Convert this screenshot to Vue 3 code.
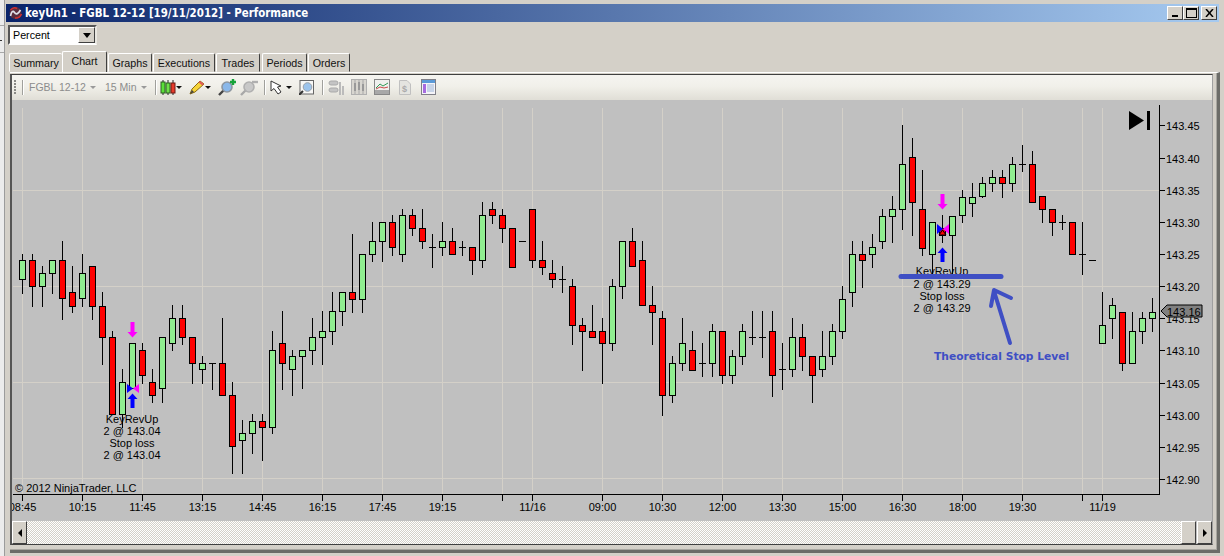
<script setup>
const raw = [
[254,260,279,293,'g'],[254,260,286,306,'r'],[266,273,286,306,'g'],[260,260,273,293,'g'],[241,260,298,319,'r'],[266,292,306,312,'r'],[254,273,298,306,'g'],[266,266,306,319,'r'],
[292,306,337,364,'r'],[331,337,414,414,'r'],[369,382,414,427,'g'],[343,343,388,388,'g'],[343,350,375,383,'r'],[369,382,395,402,'r'],[337,337,388,402,'g'],[305,318,343,350,'g'],
[305,318,337,344,'r'],[337,337,363,383,'r'],[356,363,369,383,'g'],[363,363,363,389,'d'],[318,363,395,395,'r'],[382,395,446,473,'r'],[420,433,440,473,'g'],[414,421,433,453,'g'],
[414,421,427,460,'r'],[331,350,427,433,'g'],[311,343,363,389,'r'],[350,356,369,395,'g'],[350,350,356,388,'g'],[318,337,350,364,'g'],[311,331,337,364,'g'],[292,311,331,344,'g'],
[292,292,311,325,'g'],[234,292,299,312,'r'],[254,254,299,312,'g'],[222,241,254,261,'g'],[222,222,241,261,'g'],[215,222,247,255,'r'],[209,215,254,261,'g'],[209,215,228,235,'r'],
[209,228,241,248,'r'],[234,247,247,267,'d'],[222,241,247,255,'g'],[228,241,254,254,'r'],[241,247,247,255,'d'],[247,247,260,274,'r'],[202,215,260,267,'g'],[202,209,215,223,'r'],
[209,215,228,242,'r'],[228,228,267,267,'r'],[241,241,241,241,'d'],[209,209,260,267,'r'],[241,260,267,274,'r'],[260,273,279,287,'r'],[266,279,279,292,'d'],[279,286,325,344,'r'],
[318,325,331,370,'r'],[305,331,337,337,'r'],[318,331,343,383,'r'],[279,286,343,350,'g'],[241,241,286,298,'g'],[228,241,266,266,'r'],[241,260,305,305,'r'],[286,305,312,344,'r'],
[311,318,395,415,'r'],[356,363,395,402,'g'],[318,343,363,370,'g'],[331,350,370,370,'r'],[343,363,363,376,'d'],[324,331,363,376,'g'],[331,331,375,383,'r'],[350,356,375,383,'g'],
[324,331,356,364,'g'],[311,337,337,344,'d'],[311,337,337,357,'d'],[311,331,375,396,'r'],[343,369,369,389,'d'],[318,337,369,376,'g'],[324,337,356,370,'r'],[356,356,375,402,'r'],
[331,356,369,376,'g'],[324,331,356,364,'g'],[286,299,331,338,'g'],[241,254,292,306,'g'],[241,254,260,287,'r'],[234,247,254,267,'g'],[209,216,241,248,'g'],[196,209,216,242,'g'],
[125,164,209,229,'g'],[138,157,202,235,'r'],[170,209,248,255,'r'],[222,222,254,273,'g'],[215,228,235,242,'r'],[216,216,235,275,'g'],[190,197,215,222,'g'],[183,197,203,216,'g'],
[177,183,196,197,'g'],[170,177,183,191,'g'],[170,177,183,197,'r'],[157,164,183,191,'g'],[145,164,164,171,'d'],[151,164,202,202,'r'],[196,196,209,222,'r'],[209,209,222,235,'r'],
[215,222,222,229,'d'],[222,222,254,254,'r'],[222,254,254,274,'d'],[260,260,260,260,'d'],[292,325,343,343,'g'],[298,305,318,338,'g'],[312,312,363,370,'r'],[312,331,363,363,'g'],
[312,318,331,343,'g'],[298,312,318,331,'g']
]
const candles = raw.map((c, i) => ({
  x: 22 + i * 10, wickTop: c[0], bodyTop: c[1], bodyBottom: c[2], wickBottom: c[3], kind: c[4]
}))
const vGrid = [22, 82, 142, 202, 262, 322, 382, 442, 502, 532, 602, 662, 722, 782, 842, 902, 962, 1022, 1082, 1102]
const hGrid = [190, 286, 382, 478]
const prices = [
  ['143.45', 125], ['143.40', 158], ['143.35', 190], ['143.30', 222], ['143.25', 254], ['143.20', 286],
  ['143.15', 318], ['143.10', 350], ['143.05', 383], ['143.00', 415], ['142.95', 447], ['142.90', 479]
]
const times = [
  ['08:45', 22], ['10:15', 82], ['11:45', 142], ['13:15', 202], ['14:45', 262], ['16:15', 322], ['17:45', 382],
  ['19:15', 442], ['', 502], ['11/16', 532], ['09:00', 602], ['10:30', 662], ['12:00', 722], ['13:30', 782],
  ['15:00', 842], ['16:30', 902], ['18:00', 962], ['19:30', 1022], ['', 1082], ['11/19', 1102]
]
const tabs = ['Summary', 'Chart', 'Graphs', 'Executions', 'Trades', 'Periods', 'Orders']
</script>

<template>
  <div class="screen">
    <aside class="behind"><i class="tick one"></i><i class="tick dark"></i><i class="tick two"></i></aside>
    <div class="window">
      <header class="title">
        <svg class="logo" width="15" height="14" viewBox="0 0 15 14">
          <circle cx="7.5" cy="7" r="6" fill="#5a2c3c" />
          <path d="M2.5 10 Q4 3 6.5 6.5 T12.5 4" fill="none" stroke="#e0e0e8" stroke-width="1.7" />
          <path d="M2.5 4 Q5.5 0.5 9 2.5" fill="none" stroke="#d03030" stroke-width="1.6" />
          <path d="M7 12 Q11.5 12.5 13.5 8" fill="none" stroke="#d03030" stroke-width="1.6" />
        </svg>
        <span class="title-text">keyUn1 - FGBL 12-12 [19/11/2012] - Performance</span>
        <div class="caption-buttons">
          <button class="cap"><i class="min"></i></button>
          <button class="cap"><i class="max"></i></button>
          <button class="cap gap"><svg width="9" height="8" viewBox="0 0 9 8"><path d="M1 0 L8 8 M8 0 L1 8" stroke="#000" stroke-width="1.5" /></svg></button>
        </div>
      </header>

      <div class="filters">
        <div class="combo">
          <span class="combo-value">Percent</span>
          <span class="combo-btn"><i class="down"></i></span>
        </div>
      </div>

      <nav class="tabs">
        <span v-for="t in tabs" :key="t" class="tab" :class="['tab-' + t.toLowerCase(), { active: t === 'Chart' }]">{{ t }}</span>
      </nav>

      <section class="panel">
        <div class="sunken">
          <div class="toolbar">
            <span class="grip"></span>
            <span class="sep first"></span>
            <span class="tool-label fgbl">FGBL 12-12</span><i class="caret grey c1"></i>
            <span class="tool-label mins">15 Min</span><i class="caret grey c2"></i>
            <span class="sep s2"></span>
            <svg class="ic i-candles" width="16" height="15" viewBox="0 0 16 15">
              <path d="M3 0v15M8 0v15M13 0v15" stroke="#222" />
              <rect x="1" y="2" width="4" height="11" fill="#5be03a" stroke="#2b5d20" />
              <rect x="6" y="3" width="4" height="10" fill="#6ee04a" stroke="#2b5d20" />
              <rect x="11" y="3" width="4" height="10" fill="#e83a2a" stroke="#6d1a14" />
            </svg>
            <i class="caret c3"></i>
            <svg class="ic i-pencil" width="16" height="15" viewBox="0 0 16 15">
              <path d="M1 14 L3 9 L11 1 L15 4 L6 12 Z" fill="#f6d43a" stroke="#8b6b10" />
              <path d="M11 1 L15 4 L13.5 5.5 L9.5 2.5 Z" fill="#e05a5a" />
              <path d="M1 14 L3 10 L5 12 Z" fill="#444" />
            </svg>
            <i class="caret c4"></i>
            <svg class="ic i-zin" width="18" height="17" viewBox="0 0 18 17">
              <path d="M1 16 L6 11" stroke="#444" stroke-width="2.4" />
              <circle cx="9" cy="8" r="5" fill="#8ab8ea" stroke="#8d96a0" stroke-width="1.6" />
              <path d="M12 3H18M15 0V6" stroke="#16a33a" stroke-width="2.4" />
            </svg>
            <svg class="ic i-zout" width="18" height="17" viewBox="0 0 18 17">
              <path d="M1 16 L6 11" stroke="#a8a8a8" stroke-width="2.4" />
              <circle cx="9" cy="8" r="5" fill="#c8c8c8" stroke="#b0b0b0" stroke-width="1.6" />
              <path d="M12 3H18" stroke="#b0b0b0" stroke-width="2.4" />
            </svg>
            <span class="sep s3"></span>
            <svg class="ic i-cursor" width="14" height="15" viewBox="0 0 14 15">
              <path d="M1 1 L1 11 L4 8.5 L8 14 L11 12 L7.5 7 L11 6 Z" fill="#fff" stroke="#333" />
            </svg>
            <i class="caret c5"></i>
            <svg class="ic i-find" width="15" height="15" viewBox="0 0 15 15">
              <rect x="1" y="0.5" width="13.5" height="13.5" fill="#f8f8f6" stroke="#666" />
              <circle cx="8.5" cy="7" r="4.3" fill="#9cc4ec" stroke="#98a0a8" />
              <path d="M0 15 L4 11" stroke="#333" stroke-width="2" />
            </svg>
            <span class="sep s4"></span>
            <svg class="ic i-a" width="17" height="15" viewBox="0 0 17 15">
              <path d="M11 2h2v13h-2zM14 6h2v9h-2z" fill="#bbb" />
              <rect x="1" y="1" width="9" height="4" rx="2" fill="#c4c4c4" stroke="#aaa" />
              <rect x="1" y="8" width="9" height="4" rx="2" fill="#c4c4c4" stroke="#aaa" />
            </svg>
            <svg class="ic i-b" width="16" height="16" viewBox="0 0 16 16">
              <rect x="0.5" y="0.5" width="15" height="15" fill="#d8d6d0" stroke="#b0b0b0" />
              <path d="M4 1v14M8 1v14M12 1v14" stroke="#a8a8a8" />
              <path d="M3 4h2v8H3zM7 3h2v8H7zM11 5h2v7h-2z" fill="#999" />
            </svg>
            <svg class="ic i-c" width="16" height="16" viewBox="0 0 16 16">
              <rect x="0.5" y="0.5" width="15" height="15" fill="#f0f0ee" stroke="#888" />
              <path d="M1 11 L15 11 L15 15 L1 15Z" fill="#a8a8a8" />
              <path d="M2 9 L6 5 L9 7 L14 4" fill="none" stroke="#2f9a55" />
              <path d="M2 10 L6 8 L10 9 L14 8" fill="none" stroke="#c84848" />
            </svg>
            <svg class="ic i-d" width="12" height="15" viewBox="0 0 12 15">
              <path d="M0.5 0.5H8L11.5 4V14.5H0.5Z" fill="#e4e4e0" stroke="#c0c0c0" />
              <text x="3" y="11.5" class="dollar">$</text>
            </svg>
            <svg class="ic i-e" width="15" height="16" viewBox="0 0 15 16">
              <rect x="0.5" y="0.5" width="14" height="15" fill="#f4f4f8" stroke="#808088" />
              <rect x="1" y="1" width="13" height="3" fill="#5b9ad8" />
              <rect x="2" y="5" width="3" height="9" fill="#a66be0" />
              <path d="M6 6h7M6 8h7M6 10h7M6 12h7" stroke="#9ab4d8" />
            </svg>
          </div>

          <svg class="chart" width="1200" height="421" viewBox="12 100 1200 421" shape-rendering="crispEdges">
            <rect v-for="x in vGrid" :key="'v' + x" :x="x" y="108" width="1" height="386" class="grid" />
            <rect v-for="y in hGrid" :key="'h' + y" x="13" :y="y" width="1146" height="1" class="grid" />

            <g v-for="c in candles" :key="c.x">
              <rect v-if="c.wickBottom > c.wickTop" :x="c.x" :y="c.wickTop" width="1" :height="c.wickBottom - c.wickTop + 1" />
              <rect v-if="c.kind === 'd'" :x="c.x - 3" :y="c.bodyTop" width="7" height="1" />
              <rect v-else :x="c.x - 2.5" :y="c.bodyTop + 0.5" width="6" :height="c.bodyBottom - c.bodyTop" :class="c.kind === 'g' ? 'up' : 'dn'" />
            </g>

            <rect x="1159" y="105" width="1" height="390" />
            <rect x="13" y="494" width="1147" height="1" />
            <rect v-for="p in prices" :key="'pt' + p[0]" x="1160" :y="p[1]" width="5" height="1" />
            <text v-for="p in prices" :key="p[0]" x="1166" :y="p[1] + 5" class="label">{{ p[0] }}</text>
            <rect v-for="t in times" :key="'tt' + t[1]" :x="t[1]" y="495" width="1" height="6" />
            <text v-for="t in times" :key="'tl' + t[1]" :x="t[1] + 0.5" y="511" class="label mid">{{ t[0] }}</text>

            <g shape-rendering="auto">
              <path d="M1129 111 L1144 120.5 L1129 130 Z" fill="#000" />
              <rect x="1147" y="111" width="3" height="19" fill="#000" />

              <path d="M130.5 322h4v10h3l-5 5.5-5-5.5h3z" class="pink" />
              <path d="M130.5 408h4v-9h3l-5-5.5-5 5.5h3z" class="blue" />
              <path d="M127 384l6 4.5-6 4.5z" fill="#0000ff" />
              <path d="M139 384l-6 4.5 6 4.5z" class="pink" />
              <path d="M940.5 194h4v10h3l-5 5.5-5-5.5h3z" class="pink" />
              <path d="M940.5 262h4v-9h3l-5-5.5-5 5.5h3z" class="blue" />
              <path d="M937 224l6 5-6 5z" fill="#0000ff" />
              <path d="M949 224l-6 5 6 5z" class="pink" />
              <path d="M939 235l3.5-5 3.5 5z" fill="#ff0000" stroke="#000" />

              <text x="132" y="423" class="label mid">KeyRevUp</text>
              <text x="132" y="435" class="label mid">2 @ 143.04</text>
              <text x="132" y="447" class="label mid">Stop loss</text>
              <text x="132" y="459" class="label mid">2 @ 143.04</text>
              <text x="942" y="275" class="label mid">KeyRevUp</text>
              <text x="942" y="288" class="label mid">2 @ 143.29</text>
              <text x="942" y="300" class="label mid">Stop loss</text>
              <text x="942" y="312" class="label mid">2 @ 143.29</text>
              <text x="15" y="492" class="label">© 2012 NinjaTrader, LLC</text>

              <path d="M1202 305 L1167 305 L1161 311 L1167 317 L1202 317 Z" fill="#808080" stroke="#000" />
              <text x="1167" y="316" class="label">143.16</text>

              <path d="M901 276.5 H1001" class="mark" stroke-width="5" />
              <path d="M1010 343 L994 291 M991 306 L994 290 L1011 298" class="mark" stroke-width="4" fill="none" />
              <text x="934" y="360" class="note">Theoretical Stop Level</text>
            </g>
          </svg>

          <div class="scrollbar">
            <button class="sb-btn"><i class="arrow left"></i></button>
            <span class="track"></span>
            <button class="sb-btn thumb"></button>
            <button class="sb-btn"><i class="arrow right"></i></button>
          </div>
        </div>
      </section>
    </div>
  </div>
</template>

<style scoped>
.screen { width: 1224px; height: 556px; display: flex; background: #d4d0c8; overflow: hidden; font-family: "Liberation Sans", Arial, sans-serif; }
.behind { width: 5px; background: #ececec; border-right: 1px solid #9c9c9c; position: relative; box-sizing: border-box; }
.tick { position: absolute; left: 0; width: 4px; background: #a8a8a8; height: 1px; }
.tick.one { top: 25px; }
.tick.two { top: 52px; }
.tick.dark { top: 40px; width: 2px; background: #333; }
.window { flex: 1; display: flex; flex-direction: column; padding-top: 4px; min-width: 0; border-top: 0; }
.title { height: 18px; flex: none; margin: 0 5px 0 1px; display: flex; align-items: center; background: linear-gradient(90deg, #0a246a 0%, #a6caf0 100%); color: #fff; }
.logo { margin: 0 2px 0 2px; flex: none; }
.title-text { font-family: "DejaVu Sans", sans-serif; font-weight: bold; font-size: 11.4px; font-stretch: condensed; white-space: nowrap; }
.caption-buttons { margin-left: auto; display: flex; margin-right: 2px; }
.cap { width: 16px; height: 14px; padding: 0; display: flex; align-items: center; justify-content: center; background: #d4d0c8; border: 1px solid; border-color: #fff #404040 #404040 #fff; position: relative; }
.cap.gap { margin-left: 2px; }
.min { display: block; width: 6px; height: 2px; background: #000; margin-top: 6px; }
.max { display: block; width: 9px; height: 7px; border: 1px solid #000; border-top-width: 2px; }
.filters { height: 29px; flex: none; padding: 3px 0 0 3px; box-sizing: border-box; }
.combo { width: 89px; height: 20px; box-sizing: border-box; display: flex; background: #fff; border: 2px solid; border-color: #555 #e8e6e0 #fff #555; }
.combo-value { flex: 1; font-size: 10.7px; line-height: 16px; padding-left: 3px; }
.combo-btn { width: 15px; background: #d4d0c8; border: 1px solid; border-color: #fff #404040 #404040 #fff; display: flex; align-items: center; justify-content: center; }
.down { width: 0; height: 0; border: 4px solid transparent; border-top: 5px solid #000; border-bottom: 0; }
.tabs { height: 21px; flex: none; display: flex; align-items: flex-end; padding-left: 4px; font-size: 10.7px; }
.tab { height: 19px; box-sizing: border-box; padding-top: 2px; margin-right: 1px; text-align: center; border: 1px solid; border-color: #fff #404040 transparent #fff; border-radius: 2px 2px 0 0; line-height: 15px; color: #111; }
.tab-summary { width: 53px; border-right: 0; margin-right: 0; }
.tab.active { width: 45px; height: 21px; border-bottom: 0; }
.tab-graphs { width: 44px; }
.tab-executions { width: 62px; }
.tab-trades { width: 44px; margin-right: 2px; }
.tab-periods { width: 45px; }
.tab-orders { width: 42px; }
.panel { flex: none; margin: 0 4px 0 5px; height: 481px; box-sizing: border-box; padding: 1px 3px 4px 0; border-top: 1px solid #fff; border-right: 3px solid #6c6c68; border-bottom: 3px solid #6c6c68; box-shadow: inset -1px 0 0 #a8a6a0, inset 0 -1px 0 #a8a6a0; }
.sunken { border: 1px solid; border-width: 1px 1px 1px 2px; border-color: #404040 #a0a0a0 #404040 #555; width: 1203px; box-sizing: border-box; }
.toolbar { height: 25px; position: relative; background: linear-gradient(180deg, #f5f4f0 0%, #f1f0ea 45%, #e0ded6 100%); }
.grip { position: absolute; left: 2px; top: 5px; width: 2px; height: 14px; background: repeating-linear-gradient(180deg, #8a8a86 0 2px, transparent 2px 3px); }
.sep { position: absolute; top: 5px; width: 1px; height: 15px; background: #a0a09c; box-shadow: 1px 0 0 #fff; }
.sep.first { left: 10px; }
.sep.s2 { left: 143px; }
.sep.s3 { left: 252px; }
.sep.s4 { left: 310px; }
.tool-label { position: absolute; top: 5px; font-size: 10.5px; line-height: 15px; color: #8c8c8c; white-space: nowrap; }
.fgbl { left: 17px; }
.mins { left: 93px; }
.caret { position: absolute; top: 11px; width: 0; height: 0; border: 3px solid transparent; border-top: 3px solid #111; border-bottom: 0; }
.caret.grey { border-top-color: #9a9a9a; }
.c1 { left: 78px; }
.c2 { left: 129px; }
.c3 { left: 164px; }
.c4 { left: 193px; }
.c5 { left: 274px; }
.ic { position: absolute; top: 5px; }
.i-candles { left: 148px; }
.i-pencil { left: 177px; }
.i-zin { left: 206px; top: 4px; }
.i-zout { left: 228px; top: 4px; }
.i-cursor { left: 258px; }
.i-find { left: 287px; }
.i-a { left: 316px; }
.i-b { left: 339px; top: 4px; }
.i-c { left: 362px; top: 4px; }
.i-d { left: 387px; }
.i-e { left: 409px; top: 4px; }
.dollar { font: bold 9px "Liberation Sans", sans-serif; fill: #aaa; }
.chart { display: block; background: #c0c0c0; }
.grid { fill: #d4d0c8; }
.up { fill: #90ee90; stroke: #000; }
.dn { fill: #ff0000; stroke: #000; }
.label { font: 11px "Liberation Sans", Arial, sans-serif; fill: #000; }
.mid { text-anchor: middle; }
.pink { fill: #ff00ff; }
.blue { fill: #0000ff; }
.mark { stroke: #3f4fc4; stroke-linecap: round; stroke-linejoin: round; }
.note { font: bold 10.7px "DejaVu Sans", sans-serif; fill: #3f4fc4; }
.scrollbar { height: 23px; display: flex; background: #c0c0c0; }
.sb-btn { width: 15px; height: 23px; padding: 0; flex: none; background: #d4d0c8; border: 1px solid; border-color: #fff #404040 #404040 #fff; display: flex; align-items: center; justify-content: center; }
.thumb { margin-right: 1px; }
.track { flex: 1; background: repeating-conic-gradient(#d4d0c8 0 25%, #fff 0 50%) 0 0 / 2px 2px; }
.arrow { width: 0; height: 0; border: 4px solid transparent; }
.arrow.left { border-right: 4px solid #000; border-left: 0; }
.arrow.right { border-left: 4px solid #000; border-right: 0; }
</style>

<style>
html, body { margin: 0; overflow: hidden; background: #d4d0c8; }
</style>
